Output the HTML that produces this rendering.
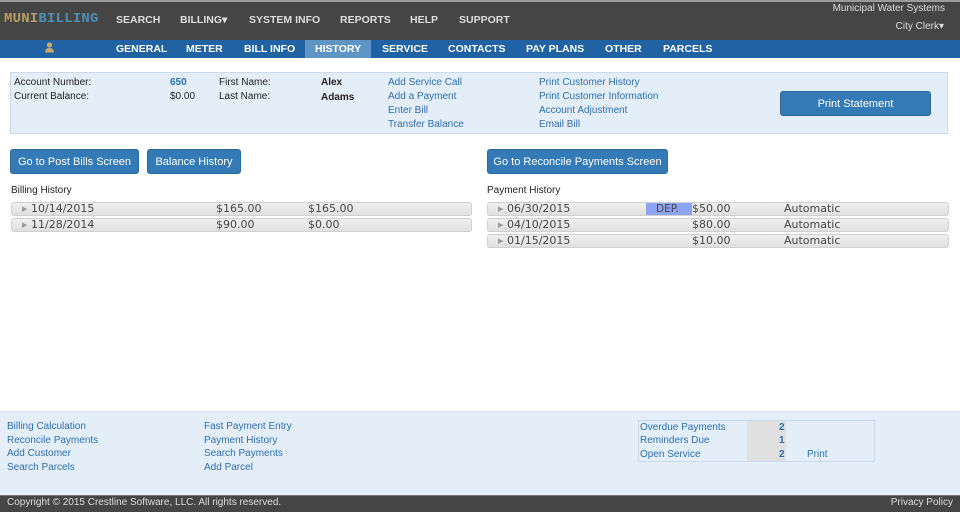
<!DOCTYPE html>
<html><head><style>
*{margin:0;padding:0;box-sizing:border-box}
body{width:960px;height:512px;position:relative;font-family:"Liberation Sans",sans-serif;background:#fff;overflow:hidden;font-size:10px;color:#222}
.a{position:absolute;white-space:nowrap}
#top{position:absolute;left:0;top:0;width:960px;height:40px;background:#454545;border-top:2px solid #9a9a9a}
#nav{position:absolute;left:0;top:40px;width:960px;height:18px;background:#2062a4}
.tn{color:#ddd;font-weight:bold;font-size:10.5px;top:14px}
.bn{color:#fff;font-weight:bold;font-size:10.5px;top:43px}
.lk{color:#2d6fb0}
.btn{position:absolute;background:#337ab7;border:1px solid #2b689c;border-radius:3px;color:#fff;font-size:11px;text-align:center;line-height:24px}
.row{position:absolute;height:14px;background:linear-gradient(#f0f0f0,#e0e0e0);border:1px solid #d0d0d0;border-radius:3px;font-family:"DejaVu Sans",sans-serif;font-size:11px;color:#444;line-height:12px;white-space:nowrap}
.row span{position:absolute;white-space:nowrap}
.tri{color:#999;font-size:7px}
</style></head><body>
<div id="top"></div>
<div class="a" style="left:4px;top:11px;font-size:14px;font-weight:bold;letter-spacing:0.2px;font-family:'Liberation Mono',monospace"><span style="color:#b79c63">MUNI</span><span style="color:#4e8fb3">BILLING</span></div>
<div class="a tn" style="left:116px">SEARCH</div>
<div class="a tn" style="left:180px">BILLING▾</div>
<div class="a tn" style="left:249px">SYSTEM INFO</div>
<div class="a tn" style="left:340px">REPORTS</div>
<div class="a tn" style="left:410px">HELP</div>
<div class="a tn" style="left:459px">SUPPORT</div>
<div class="a" style="right:15px;top:3px;color:#ddd;font-size:10px">Municipal Water Systems</div>
<div class="a" style="right:16px;top:21px;color:#ddd;font-size:10px">City Clerk▾</div>
<div id="nav"></div>
<div class="a" style="left:305px;top:40px;width:66px;height:18px;background:#5f95c4"></div>
<svg class="a" style="left:44px;top:42px" width="11" height="11" viewBox="0 0 11 11"><circle cx="5.5" cy="3" r="2.6" fill="#c9a86a"/><path d="M1 10.5 Q1 6 5.5 6 Q10 6 10 10.5Z" fill="#c9a86a"/></svg>
<div class="a bn" style="left:116px">GENERAL</div>
<div class="a bn" style="left:186px">METER</div>
<div class="a bn" style="left:244px">BILL INFO</div>
<div class="a bn" style="left:315px">HISTORY</div>
<div class="a bn" style="left:382px">SERVICE</div>
<div class="a bn" style="left:448px">CONTACTS</div>
<div class="a bn" style="left:526px">PAY PLANS</div>
<div class="a bn" style="left:605px">OTHER</div>
<div class="a bn" style="left:663px">PARCELS</div>

<div class="a" style="left:10px;top:72px;width:938px;height:62px;background:#e4eef9;border:1px solid #c9daec"></div>
<div class="a" style="left:14px;top:77px">Account Number:</div>
<div class="a" style="left:14px;top:91px">Current Balance:</div>
<div class="a lk" style="left:170px;top:77px;font-weight:bold">650</div>
<div class="a" style="left:170px;top:91px">$0.00</div>
<div class="a" style="left:219px;top:77px">First Name:</div>
<div class="a" style="left:219px;top:91px">Last Name:</div>
<div class="a" style="left:321px;top:77px;font-weight:bold">Alex</div>
<div class="a" style="left:321px;top:92px;font-weight:bold">Adams</div>
<div class="a lk" style="left:388px;top:77px">Add Service Call</div>
<div class="a lk" style="left:388px;top:91px">Add a Payment</div>
<div class="a lk" style="left:388px;top:105px">Enter Bill</div>
<div class="a lk" style="left:388px;top:119px">Transfer Balance</div>
<div class="a lk" style="left:539px;top:77px">Print Customer History</div>
<div class="a lk" style="left:539px;top:91px">Print Customer Information</div>
<div class="a lk" style="left:539px;top:105px">Account Adjustment</div>
<div class="a lk" style="left:539px;top:119px">Email Bill</div>
<div class="btn" style="left:780px;top:91px;width:151px;height:25px">Print Statement</div>

<div class="btn" style="left:10px;top:149px;width:129px;height:25px">Go to Post Bills Screen</div>
<div class="btn" style="left:147px;top:149px;width:94px;height:25px">Balance History</div>
<div class="btn" style="left:487px;top:149px;width:181px;height:25px">Go to Reconcile Payments Screen</div>

<div class="a" style="left:11px;top:185px">Billing History</div>
<div class="row" style="left:11px;top:202px;width:461px"><span class="tri" style="left:10px">▶</span><span style="left:19px">10/14/2015</span><span style="left:204px">$165.00</span><span style="left:296px">$165.00</span></div>
<div class="row" style="left:11px;top:218px;width:461px"><span class="tri" style="left:10px">▶</span><span style="left:19px">11/28/2014</span><span style="left:204px">$90.00</span><span style="left:296px">$0.00</span></div>

<div class="a" style="left:487px;top:185px">Payment History</div>
<div class="row" style="left:487px;top:202px;width:462px"><span class="tri" style="left:10px">▶</span><span style="left:158px;top:0;width:46px;height:12px;background:#8ea5f5"></span><span style="left:168px;font-size:10.5px">DEP.</span><span style="left:19px">06/30/2015</span><span style="left:204px">$50.00</span><span style="left:296px">Automatic</span></div>
<div class="row" style="left:487px;top:218px;width:462px"><span class="tri" style="left:10px">▶</span><span style="left:19px">04/10/2015</span><span style="left:204px">$80.00</span><span style="left:296px">Automatic</span></div>
<div class="row" style="left:487px;top:234px;width:462px"><span class="tri" style="left:10px">▶</span><span style="left:19px">01/15/2015</span><span style="left:204px">$10.00</span><span style="left:296px">Automatic</span></div>

<div class="a" style="left:0;top:411px;width:960px;height:84px;background:#e4eef9;border-top:1px solid #d6e2ef"></div>
<div class="a lk" style="left:7px;top:421px">Billing Calculation</div>
<div class="a lk" style="left:7px;top:435px">Reconcile Payments</div>
<div class="a lk" style="left:7px;top:448px">Add Customer</div>
<div class="a lk" style="left:7px;top:462px">Search Parcels</div>
<div class="a lk" style="left:204px;top:421px">Fast Payment Entry</div>
<div class="a lk" style="left:204px;top:435px">Payment History</div>
<div class="a lk" style="left:204px;top:448px">Search Payments</div>
<div class="a lk" style="left:204px;top:462px">Add Parcel</div>
<div class="a" style="left:638px;top:420px;width:237px;height:42px;border:1px solid #c9daec"></div>
<div class="a" style="left:747px;top:421px;width:39px;height:40px;background:#e0e0e0"></div>
<div class="a lk" style="left:640px;top:422px">Overdue Payments</div>
<div class="a lk" style="left:640px;top:435px">Reminders Due</div>
<div class="a lk" style="left:640px;top:449px">Open Service</div>
<div class="a lk" style="left:779px;top:422px;font-weight:bold">2</div>
<div class="a lk" style="left:779px;top:435px;font-weight:bold">1</div>
<div class="a lk" style="left:779px;top:449px;font-weight:bold">2</div>
<div class="a lk" style="left:807px;top:449px">Print</div>

<div class="a" style="left:0;top:495px;width:960px;height:17px;background:#454545;border-top:1px solid #777"></div>
<div class="a" style="left:7px;top:497px;color:#ddd">Copyright © 2015 Crestline Software, LLC. All rights reserved.</div>
<div class="a" style="right:7px;top:497px;color:#ddd">Privacy Policy</div>
</body></html>
